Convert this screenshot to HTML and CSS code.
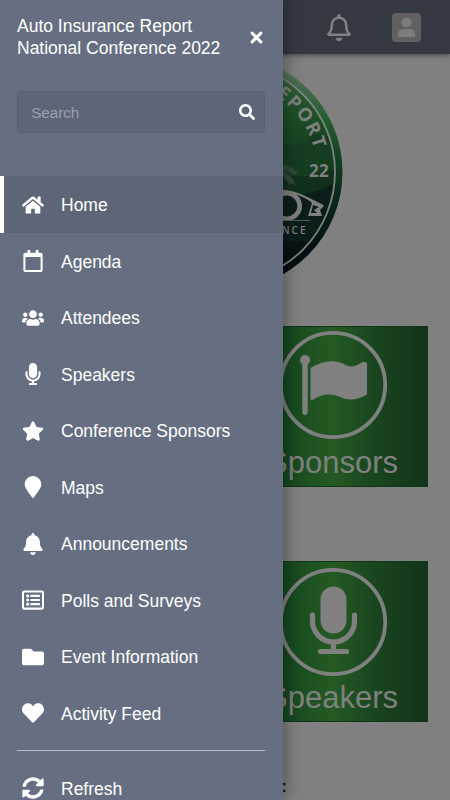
FILE: index.html
```html
<!DOCTYPE html>
<html lang="en">
<head>
<meta charset="utf-8">
<title>Auto Insurance Report National Conference 2022</title>
<link rel="stylesheet" href="styles.css">
</head>
<body>
<div class="app">
  <header class="topbar">
    <svg class="topbar-bell" viewBox="0 0 448 512"><path fill-rule="evenodd" d="M439.39 362.29c-19.32-20.76-55.47-51.99-55.47-154.29 0-77.7-54.48-139.9-127.94-155.16V32c0-17.67-14.32-32-31.98-32s-31.98 14.33-31.98 32v20.84C118.56 68.1 64.08 130.3 64.08 208c0 102.3-36.15 133.53-55.47 154.29-6 6.45-8.66 14.16-8.61 21.71.11 16.4 12.98 32 32.1 32h383.8c19.12 0 32-15.6 32.1-32 .05-7.55-2.61-15.27-8.61-21.71zM67.53 368c21.22-27.97 44.42-74.33 44.53-159.42 0-.2-.06-.38-.06-.58 0-61.86 50.14-112 112-112s112 50.14 112 112c0 .2-.06.38-.06.58.11 85.1 23.31 131.46 44.53 159.42H67.53zM224 512c35.32 0 63.97-28.65 63.97-64H160.03c0 35.35 28.65 64 63.97 64z"/></svg>
    <svg class="avatar" viewBox="0 0 29 29"><rect width="29" height="29" rx="4" fill="#606060"/><g fill="#7c7c7c"><circle cx="14.5" cy="9.5" r="5"/><path d="M6 24v-2.500q0-5.500 5.500-5.500h6q5.500 0 5.500 5.500V24z"/></g></svg>
  </header>
  <main class="page">
    <svg class="logo" viewBox="0 0 236 236">
      <defs>
        <linearGradient id="rim" x2="0" y2="1"><stop offset="0" stop-color="#6c8470"/><stop offset=".12" stop-color="#4a6b50"/><stop offset=".26" stop-color="#275f34"/><stop offset=".45" stop-color="#123f20"/><stop offset=".65" stop-color="#08231c"/><stop offset=".85" stop-color="#060d14"/></linearGradient>
        <linearGradient id="land" x2="0" y2="1"><stop offset="0" stop-color="#43684a"/><stop offset=".2" stop-color="#205228"/><stop offset=".38" stop-color="#174321"/><stop offset=".6" stop-color="#10291b"/><stop offset=".72" stop-color="#0c1b1b"/><stop offset="1" stop-color="#05080f"/></linearGradient>
        <clipPath id="inner"><circle cx="118" cy="118" r="109"/></clipPath>
        <path id="arc" d="M26 118A92 92 0 0 1 210 118"/>
      </defs>
      <circle cx="118" cy="118" r="117.500" fill="url(#rim)"/>
      <circle cx="118" cy="118" r="109" fill="url(#land)"/>
      <g clip-path="url(#inner)">
        <path fill="#153d20" d="M118 92q30-12 52-4t30-3 30 2v40H118z"/>
        <path fill="#122f1c" d="M118 126q35-10 58-5t54-7v50H118z"/>
        <path fill="#0c1e1b" d="M118 142q25 0 38-4t30 1 45-12v60H118z"/>
      </g>
      <path fill="#31483a" d="M158 110q20-4 35 10l-3-1-2 3q-7-6-15-6q13 5 16 16l-4-3-2 2q-6-10-18-13z"/>
      <circle cx="118" cy="118" r="110" fill="none" stroke="#7e857f" stroke-width="1.800"/>
      <text class="logo-arc"><textPath href="#arc" startOffset="92.500%" text-anchor="end">REPORT</textPath></text>
      <text class="logo-year" x="202" y="123">22</text>
      <circle cx="180" cy="152" r="12.700" fill="none" stroke="#808080" stroke-width="4.600"/>
      <path d="M160 137q20-3 38 6l18 9" fill="none" stroke="#808080" stroke-width="2"/>
      <path fill="#808080" fill-rule="evenodd" d="M198 143l19 9-4 4 2 6h-14l4-13zM206 151l-2 8h6l-3-3 5-3z"/>
      <path d="M160 166.500h43" stroke="#536059" stroke-width="1"/>
      <text class="logo-small" x="200.500" y="180">NCE</text>
    </svg>
    <section class="tiles">
      <div class="tile">
        <svg class="tile-art" viewBox="0 0 110 110"><circle cx="55" cy="55" r="52.200" fill="none" stroke="#808080" stroke-width="3.800"/><circle cx="27" cy="30" r="5" fill="#808080"/><path fill="#808080" d="M24.300 32h5.400v50q0 3-2.700 3t-2.700-3zM32.500 38q20-12 36-2.500 7 3 15-3 5-2 5.500 1v31q-15 9-28 2-12-5-24 2-4 3-4.500 0z"/></svg>
        <span class="tile-label">Sponsors</span>
      </div>
      <div class="tile tile-speakers">
        <svg class="tile-art" viewBox="0 0 110 110"><circle cx="55" cy="55" r="52.200" fill="none" stroke="#808080" stroke-width="3.800"/><rect x="42.500" y="19.500" width="26" height="47" rx="13" fill="#808080"/><path d="M34.500 48v6a21 21 0 0 0 42 0v-6M55.500 75.500v8M42.500 84.500h26" fill="none" stroke="#808080" stroke-width="5.200" stroke-linecap="round"/></svg>
        <span class="tile-label">Speakers</span>
      </div>
    </section>
    <p class="more">:</p>
  </main>

  <aside class="drawer">
    <div class="drawer-head">
      <h1>Auto Insurance Report<br>National Conference 2022</h1>
      <svg class="close" viewBox="0 0 12 12"><path d="M2 2l8 8M10 2l-8 8"/></svg>
    </div>
    <div class="search">
      <span>Search</span>
      <svg viewBox="0 0 512 512"><path d="M505 442.700L405.300 343c-4.500-4.500-10.600-7-17-7H372c27.600-35.300 44-79.700 44-128C416 93.100 322.900 0 208 0S0 93.100 0 208s93.100 208 208 208c48.300 0 92.700-16.400 128-44v16.300c0 6.400 2.500 12.500 7 17l99.700 99.700c9.400 9.400 24.600 9.400 33.900 0l28.300-28.300c9.400-9.400 9.400-24.600.1-34zM208 336c-70.700 0-128-57.200-128-128 0-70.700 57.200-128 128-128 70.700 0 128 57.200 128 128 0 70.700-57.200 128-128 128z"/></svg>
    </div>
    <nav>
      <a class="item active"><svg viewBox="0 0 576 512"><path d="M280.370 148.260L96 300.110V464a16 16 0 0 0 16 16l112.060-.29a16 16 0 0 0 15.920-16V368a16 16 0 0 1 16-16h64a16 16 0 0 1 16 16v95.640a16 16 0 0 0 16 16.050L464 480a16 16 0 0 0 16-16V300L295.670 148.260a12.190 12.190 0 0 0-15.300 0zM571.600 251.470L488 182.560V44.050a12 12 0 0 0-12-12h-56a12 12 0 0 0-12 12v72.610L318.470 43a48 48 0 0 0-61 0L4.340 251.470a12 12 0 0 0-1.600 16.900l25.500 31A12 12 0 0 0 45.150 301l235.220-193.740a12.190 12.190 0 0 1 15.300 0L530.900 301a12 12 0 0 0 16.900-1.600l25.500-31a12 12 0 0 0-1.700-16.930z"/></svg><span>Home</span></a>
      <a class="item"><svg viewBox="0 0 448 512"><path d="M400 64h-48V12c0-6.600-5.400-12-12-12h-40c-6.600 0-12 5.400-12 12v52H160V12c0-6.600-5.400-12-12-12h-40c-6.600 0-12 5.400-12 12v52H48C21.500 64 0 85.500 0 112v352c0 26.500 21.500 48 48 48h352c26.500 0 48-21.500 48-48V112c0-26.500-21.500-48-48-48zm-6 400H54c-3.300 0-6-2.700-6-6V160h352v298c0 3.300-2.700 6-6 6z"/></svg><span>Agenda</span></a>
      <a class="item"><svg viewBox="0 0 640 512"><path d="M96 224c35.300 0 64-28.700 64-64s-28.700-64-64-64-64 28.700-64 64 28.700 64 64 64zm448 0c35.300 0 64-28.700 64-64s-28.700-64-64-64-64 28.700-64 64 28.700 64 64 64zm32 32h-64c-17.600 0-33.500 7.100-45.100 18.600 40.300 22.100 68.900 62 75.100 109.400h66c17.700 0 32-14.300 32-32v-32c0-35.300-28.700-64-64-64zm-256 0c61.900 0 112-50.100 112-112S381.900 32 320 32 208 82.100 208 144s50.100 112 112 112zm76.800 32h-8.300c-20.800 10-43.900 16-68.500 16s-47.600-6-68.500-16h-8.300C179.600 288 128 339.600 128 403.200V432c0 26.500 21.500 48 48 48h288c26.500 0 48-21.500 48-48v-28.800c0-63.600-51.600-115.200-115.200-115.200zm-223.700-13.400C161.500 263.100 145.600 256 128 256H64c-35.300 0-64 28.700-64 64v32c0 17.700 14.300 32 32 32h65.900c6.300-47.400 34.900-87.300 75.200-109.400z"/></svg><span>Attendees</span></a>
      <a class="item"><svg viewBox="0 0 352 512"><path d="M176 352c53.020 0 96-42.980 96-96V96c0-53.020-42.980-96-96-96S80 42.980 80 96v160c0 53.020 42.980 96 96 96zm160-160h-16c-8.840 0-16 7.160-16 16v48c0 74.800-64.490 134.820-140.790 127.380C96.710 376.890 48 317.110 48 250.300V208c0-8.840-7.160-16-16-16H16c-8.840 0-16 7.160-16 16v40.160c0 89.640 63.970 169.550 152 181.690V464H96c-8.840 0-16 7.160-16 16v16c0 8.840 7.160 16 16 16h160c8.840 0 16-7.160 16-16v-16c0-8.840-7.160-16-16-16h-56v-33.770C285.710 418.470 352 344.900 352 256v-48c0-8.840-7.160-16-16-16z"/></svg><span>Speakers</span></a>
      <a class="item"><svg viewBox="0 0 576 512"><path d="M259.300 17.800L194 150.200 47.900 171.500c-26.200 3.800-36.700 36.100-17.700 54.600l105.700 103-25 145.500c-4.500 26.300 23.200 46 46.400 33.700L288 439.600l130.700 68.700c23.200 12.200 50.900-7.400 46.400-33.700l-25-145.500 105.700-103c19-18.500 8.500-50.800-17.700-54.600L382 150.200 316.700 17.800c-11.700-23.600-45.600-23.900-57.400 0z"/></svg><span>Conference Sponsors</span></a>
      <a class="item"><svg viewBox="0 0 384 512"><path d="M172.268 501.670C26.970 291.031 0 269.413 0 192 0 85.961 85.961 0 192 0s192 85.961 192 192c0 77.413-26.970 99.031-172.268 309.670-9.535 13.774-29.930 13.773-39.464 0z"/></svg><span>Maps</span></a>
      <a class="item"><svg viewBox="0 0 448 512"><path d="M224 512c35.320 0 63.970-28.650 63.970-64H160.030c0 35.350 28.650 64 63.970 64zm215.390-149.710c-19.320-20.760-55.470-51.990-55.470-154.290 0-77.700-54.480-139.900-127.940-155.160V32c0-17.670-14.320-32-31.980-32s-31.980 14.330-31.980 32v20.840C118.560 68.100 64.080 130.300 64.080 208c0 102.300-36.150 133.530-55.470 154.290-6 6.450-8.660 14.160-8.610 21.710.11 16.400 12.980 32 32.100 32h383.800c19.120 0 32-15.600 32.100-32 .05-7.550-2.610-15.270-8.610-21.710z"/></svg><span>Announcements</span></a>
      <a class="item"><svg viewBox="0 0 512 512"><path fill-rule="evenodd" d="M464 32H48C21.490 32 0 53.490 0 80v352c0 26.510 21.490 48 48 48h416c26.510 0 48-21.490 48-48V80c0-26.510-21.490-48-48-48zm-6 400H54a6 6 0 0 1-6-6V86a6 6 0 0 1 6-6h404a6 6 0 0 1 6 6v340a6 6 0 0 1-6 6z"/><path d="M204 136h200a12 12 0 0 1 12 12v24a12 12 0 0 1-12 12H204a12 12 0 0 1-12-12v-24a12 12 0 0 1 12-12zM204 232h200a12 12 0 0 1 12 12v24a12 12 0 0 1-12 12H204a12 12 0 0 1-12-12v-24a12 12 0 0 1 12-12zM204 328h200a12 12 0 0 1 12 12v24a12 12 0 0 1-12 12H204a12 12 0 0 1-12-12v-24a12 12 0 0 1 12-12z"/><circle cx="132" cy="160" r="36"/><circle cx="132" cy="256" r="36"/><circle cx="132" cy="352" r="36"/></svg><span>Polls and Surveys</span></a>
      <a class="item"><svg viewBox="0 0 512 512"><path d="M464 128H272l-64-64H48C21.490 64 0 85.490 0 112v288c0 26.510 21.490 48 48 48h416c26.510 0 48-21.490 48-48V176c0-26.510-21.490-48-48-48z"/></svg><span>Event Information</span></a>
      <a class="item"><svg viewBox="0 0 512 512"><path d="M462.300 62.600C407.500 15.900 326 24.300 275.700 76.200L256 96.500l-19.700-20.300C186.100 24.300 104.500 15.900 49.700 62.600c-62.800 53.600-66.100 149.800-9.900 207.900l193.500 199.800c12.500 12.900 32.800 12.900 45.300 0l193.500-199.800c56.300-58.100 53-154.300-9.800-207.900z"/></svg><span>Activity Feed</span></a>
    </nav>
    <hr>
    <a class="item"><svg viewBox="0 0 512 512"><path d="M370.720 133.280C339.458 104.008 298.888 87.962 255.848 88c-77.458.068-144.328 53.178-162.791 126.850-1.344 5.363-6.122 9.150-11.651 9.150H24.103c-7.498 0-13.194-6.807-11.807-14.176C33.933 94.924 134.813 8 256 8c66.448 0 126.791 26.136 171.315 68.685L463.030 40.970C478.149 25.851 504 36.559 504 57.941V192c0 13.255-10.745 24-24 24H345.941c-21.382 0-32.090-25.851-16.971-40.971l41.750-41.749zM32 296h134.059c21.382 0 32.090 25.851 16.971 40.971l-41.750 41.750c31.262 29.273 71.835 45.319 114.876 45.280 77.418-.07 144.315-53.144 162.787-126.849 1.344-5.363 6.122-9.150 11.651-9.150h57.304c7.498 0 13.194 6.807 11.807 14.176C478.067 417.076 377.187 504 256 504c-66.448 0-126.791-26.136-171.315-68.685L48.970 471.030C33.851 486.149 8 475.441 8 454.059V320c0-13.255 10.745-24 24-24z"/></svg><span>Refresh</span></a>
  </aside>
</div>
</body>
</html>
```
FILE: styles.css
```css
* { box-sizing: border-box; }
body {
  margin: 0;
  background: #808080;
  font-family: "Liberation Sans", Arial, sans-serif;
}
.app {
  position: relative;
  height: 800px;
  overflow: hidden;
}
.topbar {
  position: relative;
  height: 54px;
  padding-right: 29px;
  display: flex;
  align-items: center;
  justify-content: flex-end;
  gap: 41px;
  background: #333842;
  box-shadow: 0 1px 5px rgba(0, 0, 0, .5);
}
.topbar-bell { width: 24px; height: 27px; fill: #808080; }
.avatar { width: 29px; height: 29px; }
.page { padding: 0 22px; }
.logo {
  display: block;
  width: 236px;
  height: 236px;
  margin: 0 auto;
}
.logo text {
  fill: #808080;
  font-family: "Open Sans", sans-serif;
  font-weight: 700;
}
.logo .logo-arc { font-size: 18.5px; letter-spacing: 1.8px; }
.logo .logo-year { font-size: 17px; letter-spacing: .4px; }
.logo .logo-small { font-size: 10px; letter-spacing: 2px; text-anchor: end; font-weight: 600; }
.tiles {
  display: grid;
  justify-content: end;
  grid-template-columns: 191px;
  gap: 74px;
  padding-top: 36px;
}
.tile {
  height: 161px;
  padding-top: 3px;
  display: flex;
  flex-direction: column;
  align-items: center;
  background: linear-gradient(90deg, #143a1c 0%, #174a20 28%, #255a23 50%, #1b4a20 67%, #163d1c 84%, #12331a 100%);
  border: 1px solid #103817;
}
.tile-speakers { padding-top: 5px; }
.tile-art { width: 110px; height: 110px; flex: none; }
.tile-label {
  margin-top: 3px;
  color: #808080;
  font-size: 31px;
  line-height: 40px;
}
.tile-speakers .tile-label { margin-top: 1px; }
.more {
  margin: 53px 0 0;
  padding-left: 259.5px;
  color: #111;
  font-size: 16px;
  font-weight: 700;
  line-height: 24px;
}
.drawer {
  position: absolute;
  top: 0;
  left: 0;
  width: 283px;
  height: 800px;
  overflow: hidden;
  background: #666f81;
  color: #fff;
  box-shadow: 0 0 18px rgba(0, 0, 0, .45);
}
.drawer-head {
  display: flex;
  justify-content: space-between;
  align-items: center;
  height: 74px;
  padding: 0 20.5px 0 17px;
}
h1 {
  margin: 0;
  font-size: 17.5px;
  font-weight: 400;
  line-height: 22px;
  white-space: nowrap;
}
.close {
  width: 13px;
  height: 13px;
  stroke: #fff;
  stroke-width: 2.8;
  stroke-linecap: round;
}
.search {
  display: flex;
  align-items: center;
  justify-content: space-between;
  height: 42px;
  margin: 17px 17.6px 43.3px 17.2px;
  padding: 0 9px 0 13px;
  border: 1px solid #586070;
  border-radius: 4px;
  background: #5d6676;
  color: #9ba1ac;
  font-size: 15.2px;
}
.search svg { width: 16px; height: 16px; fill: #fff; }
.item {
  display: flex;
  align-items: center;
  gap: 17px;
  height: 56.5px;
  padding-left: 22px;
  font-size: 17.5px;
  white-space: nowrap;
}
.item span { padding-top: 2px; }
.item svg { width: 22px; height: 22px; fill: #fff; flex: none; }
.item.active {
  padding-left: 18px;
  border-left: 4px solid #fff;
  background: #5d6676;
}
hr {
  height: 1px;
  margin: 8.5px 17.6px 9px 17.2px;
  border: 0;
  background: #b4c0c8;
}
```
